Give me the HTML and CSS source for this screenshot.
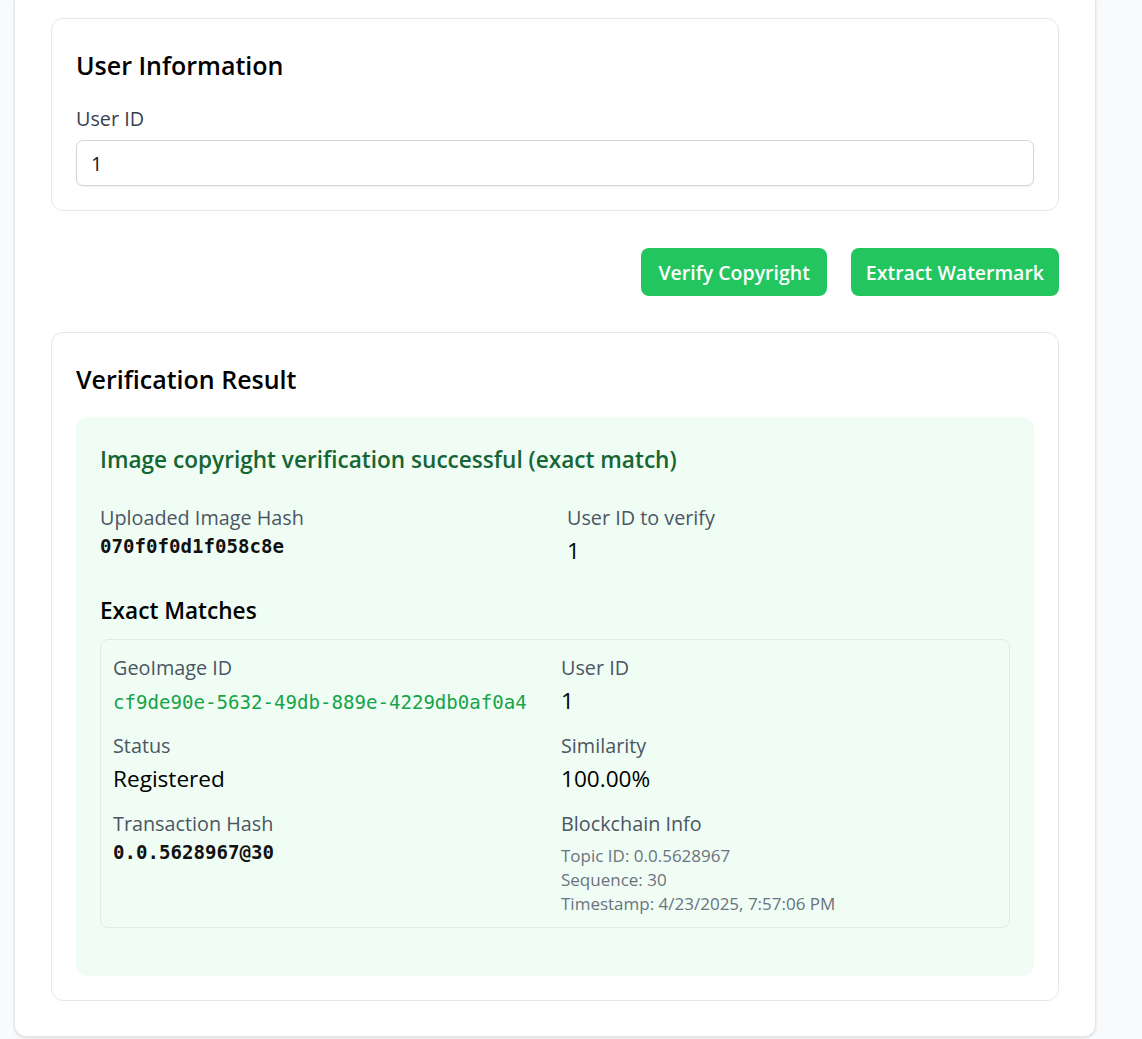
FILE: index.html
```html
<!DOCTYPE html>
<html lang="en">
<head>
<meta charset="utf-8">
<title>Verify Copyright</title>
<link rel="stylesheet" href="styles.css">
</head>
<body>
<div class="page">
  <div class="container">
    <section class="card">
      <h2 class="card-title">User Information</h2>
      <label class="form-label" for="uid">User ID</label>
      <input id="uid" class="input" type="text" value="1">
    </section>

    <div class="actions">
      <button class="btn">Verify Copyright</button>
      <button class="btn">Extract Watermark</button>
    </div>

    <section class="card">
      <h2 class="card-title">Verification Result</h2>
      <div class="result">
        <h3 class="result-title">Image copyright verification successful (exact match)</h3>
        <div class="grid grid-main">
          <div class="field">
            <div class="label">Uploaded Image Hash</div>
            <div class="mono bold">070f0f0d1f058c8e</div>
          </div>
          <div class="field">
            <div class="label">User ID to verify</div>
            <div class="value">1</div>
          </div>
        </div>

        <h3 class="section-title">Exact Matches</h3>
        <div class="match">
          <div class="grid grid-match">
            <div class="field">
              <div class="label">GeoImage ID</div>
              <div class="value"><span class="mono-inline green">cf9de90e-5632-49db-889e-4229db0af0a4</span></div>
            </div>
            <div class="field">
              <div class="label">User ID</div>
              <div class="value">1</div>
            </div>
            <div class="field">
              <div class="label">Status</div>
              <div class="value">Registered</div>
            </div>
            <div class="field">
              <div class="label">Similarity</div>
              <div class="value">100.00%</div>
            </div>
            <div class="field">
              <div class="label">Transaction Hash</div>
              <div class="mono bold">0.0.5628967@30</div>
            </div>
            <div class="field">
              <div class="label">Blockchain Info</div>
              <div class="small">
                <div>Topic ID: 0.0.5628967</div>
                <div>Sequence: 30</div>
                <div>Timestamp: 4/23/2025, 7:57:06 PM</div>
              </div>
            </div>
          </div>
        </div>
      </div>
    </section>
  </div>
</div>
</body>
</html>
```

FILE: styles.css
```css
* { box-sizing: border-box; }

body {
  margin: 0;
  background: #f9fafb;
  font-family: "Open Sans", "Noto Sans", sans-serif;
  color: #111827;
}

.page {
  padding: 0 46px 2px 14px;
}

.container {
  background: #ffffff;
  border: 1px solid #e5e7eb;
  border-top: none;
  border-radius: 0 0 12px 12px;
  box-shadow: 0 1px 3px rgba(0, 0, 0, 0.08), 0 1px 2px rgba(0, 0, 0, 0.05);
  padding: 18px 36px 35px;
}

.card {
  border: 1px solid #e5e7eb;
  border-radius: 12px;
  padding: 24px;
  background: #ffffff;
}

.card-title {
  margin: 0 0 18px;
  padding-top: 2px;
  font-size: 25px;
  line-height: 40px;
  font-weight: 600;
  color: #000000;
}

.form-label {
  display: block;
  padding-top: 1px;
  font-size: 19.8px;
  line-height: 29px;
  font-weight: 500;
  color: #374151;
  margin-bottom: 7px;
}

.input {
  display: block;
  width: 100%;
  height: 46px;
  padding: 0 14px;
  border: 1px solid #d1d5db;
  border-radius: 7px;
  box-shadow: 0 1px 2px rgba(0, 0, 0, 0.06);
  font-family: inherit;
  font-size: 19.8px;
  color: #111827;
  background: #ffffff;
}

.actions {
  display: flex;
  justify-content: flex-end;
  gap: 24px;
  margin: 37px 0 36px;
}

.btn {
  height: 48px;
  padding: 0 15px;
  border: none;
  border-radius: 8px;
  background: #22c55e;
  color: #ffffff;
  font-family: inherit;
  font-size: 19.5px;
  font-weight: 600;
}

.btn:first-child { padding: 0 17px; }

.result {
  background: #f0fdf4;
  border-radius: 12px;
  padding: 24px;
}

.result-title {
  margin: 0 0 25px;
  padding-top: 1px;
  font-size: 22.6px;
  line-height: 35px;
  font-weight: 600;
  color: #166534;
}

.grid {
  display: grid;
  grid-template-columns: 1fr 1fr;
}

.grid-main { gap: 24px; }
.grid-match { gap: 12px; }

.label {
  padding-top: 1px;
  font-size: 19.8px;
  line-height: 29px;
  color: #4b5563;
}

.value {
  padding-top: 1px;
  font-size: 22.6px;
  line-height: 35px;
  color: #000000;
}

.mono {
  font-family: "DejaVu Sans Mono", "Liberation Mono", monospace;
  font-size: 19.1px;
  line-height: 30px;
}

.mono-inline {
  font-family: "DejaVu Sans Mono", "Liberation Mono", monospace;
  font-size: 19.1px;
  line-height: 1;
}

.bold { font-weight: 700; color: #111111; }
.green { color: #16a34a; }

.section-title {
  margin: 24px 0 11px;
  padding-top: 1px;
  font-size: 22.6px;
  line-height: 35px;
  font-weight: 600;
  color: #000000;
}

.match {
  border: 1px solid #e5e7eb;
  border-radius: 8px;
  padding: 12px;
  margin-bottom: 24px;
}

.small {
  margin-top: 5px;
  padding-top: 1px;
  font-size: 17px;
  line-height: 24px;
  color: #6b7280;
}

.small div:last-child { line-height: 23px; }
```
